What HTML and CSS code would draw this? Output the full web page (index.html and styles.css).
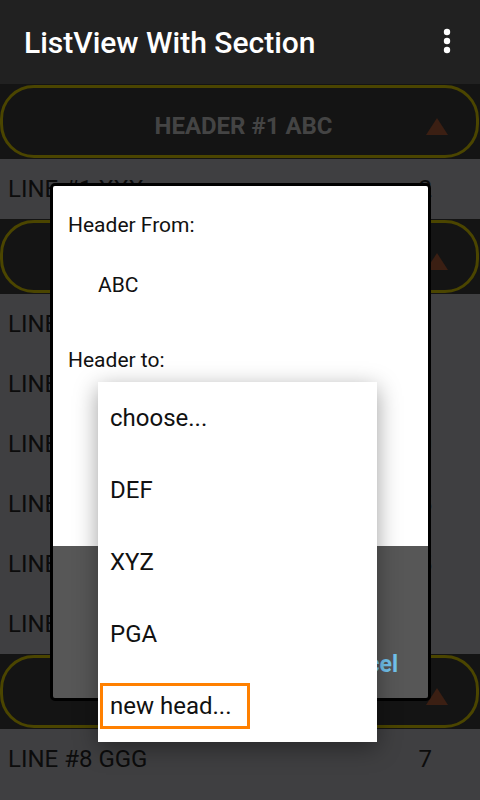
FILE: index.html
```html
<!DOCTYPE html>
<html>
<head>
<meta charset="utf-8">
<link rel="stylesheet" href="styles.css">
</head>
<body>
<div class="screen">
  <header class="appbar">
    <span class="title">ListView With Section</span>
    <svg class="overflow" width="8" height="30" viewBox="0 0 8 30"><circle cx="4" cy="5" r="3.2" fill="#fff"/><circle cx="4" cy="14" r="3.2" fill="#fff"/><circle cx="4" cy="23" r="3.2" fill="#fff"/></svg>
  </header>
  <div class="list">
    <div class="sec"><div class="pill"><span class="sec-text">HEADER #1 ABC</span><span class="tri"></span></div></div>
    <div class="row"><span>LINE #1 XXX</span><span>2</span></div>
    <div class="sec"><div class="pill"><span class="sec-text">HEADER #2 DEF</span><span class="tri"></span></div></div>
    <div class="row"><span>LINE #2 YYY</span><span>1</span></div>
    <div class="row"><span>LINE #3 ZZZ</span><span>3</span></div>
    <div class="row"><span>LINE #4 AAA</span><span>0</span></div>
    <div class="row"><span>LINE #5 BBB</span><span>5</span></div>
    <div class="row"><span>LINE #6 CCC</span><span>5</span></div>
    <div class="row"><span>LINE #7 DDD</span><span>3</span></div>
    <div class="sec"><div class="pill"><span class="sec-text">HEADER #3 XYZ</span><span class="tri"></span></div></div>
    <div class="row"><span>LINE #8 GGG</span><span>7</span></div>
  </div>

  <div class="dialog">
    <div class="dlg-body">
      <div class="lbl">Header From:</div>
      <div class="val">ABC</div>
      <div class="lbl lbl-to">Header to:</div>
    </div>
    <div class="dlg-buttons">
      <span class="btn">OK</span>
      <span class="btn">Cancel</span>
    </div>
  </div>

  <ul class="popup">
    <li class="item">choose...</li>
    <li class="item">DEF</li>
    <li class="item">XYZ</li>
    <li class="item">PGA</li>
    <li class="item focused"><span class="focus-ring"></span>new head...</li>
  </ul>
</div>
</body>
</html>
```

FILE: styles.css
```css
* { box-sizing: border-box; }
html, body { margin: 0; padding: 0; }
body {
  width: 480px;
  height: 800px;
  overflow: hidden;
  font-family: Roboto, "Noto Sans", sans-serif;
  background: #3f3f41;
}
.screen {
  position: relative;
  width: 480px;
  height: 800px;
  overflow: hidden;
}
.appbar {
  height: 84px;
  background: #212121;
  display: flex;
  align-items: center;
  padding-left: 24px;
  padding-right: 29px;
}
.title {
  color: #fff;
  font-weight: 500;
  font-size: 30px;
  flex: 1;
}
.overflow { display: block; margin-top: -1px; }

.list { display: flex; flex-direction: column; }
.sec {
  height: 75px;
  background: #141414;
  padding: 1px 1px 1px 0;
  display: flex;
}
.pill {
  flex: 1;
  border: 3px solid #4b4500;
  border-radius: 34px;
  display: flex;
  align-items: center;
  justify-content: center;
  position: relative;
  padding-top: 9px;
}
.sec-text {
  color: #444444;
  font-weight: 700;
  font-size: 24px;
  margin-left: 8px;
}
.tri {
  position: absolute;
  right: 28px;
  top: 30px;
  width: 0;
  height: 0;
  border-left: 11.5px solid transparent;
  border-right: 11.5px solid transparent;
  border-bottom: 17px solid #3b1f13;
}
.row {
  height: 60px;
  display: flex;
  align-items: center;
  justify-content: space-between;
  padding: 0 48px 0 8px;
  color: #0c0c0c;
  font-size: 24px;
}

.dialog {
  position: absolute;
  left: 50px;
  top: 183px;
  width: 381px;
  height: 518px;
  border: 3px solid #000;
  border-radius: 5px;
  overflow: hidden;
  display: flex;
  flex-direction: column;
}
.dlg-body {
  height: 360px;
  background: #fff;
  padding: 27px 0 0 15px;
  font-size: 21px;
  color: #111;
}
.lbl, .val { line-height: 24px; }
.val { margin-top: 36px; padding-left: 30px; }
.lbl-to { margin-top: 51px; }
.dlg-buttons {
  flex: 1;
  background: #575757;
  display: flex;
  justify-content: flex-end;
  align-items: flex-end;
  gap: 40px;
  padding: 0 30px 9px 0;
}
.btn {
  color: #72c3ee;
  font-weight: 700;
  font-size: 23px;
  line-height: 48px;
}

.popup {
  position: absolute;
  left: 98px;
  top: 382px;
  width: 279px;
  margin: 0;
  padding: 0;
  list-style: none;
  background: #fff;
  box-shadow: 0 6px 22px rgba(0, 0, 0, 0.38);
}
.item {
  position: relative;
  height: 72px;
  line-height: 72px;
  padding-left: 12px;
  font-size: 24px;
  color: #111;
}
.focus-ring {
  position: absolute;
  left: 2px;
  top: 13px;
  width: 150px;
  height: 46px;
  border: 3px solid #ff8000;
}
```
